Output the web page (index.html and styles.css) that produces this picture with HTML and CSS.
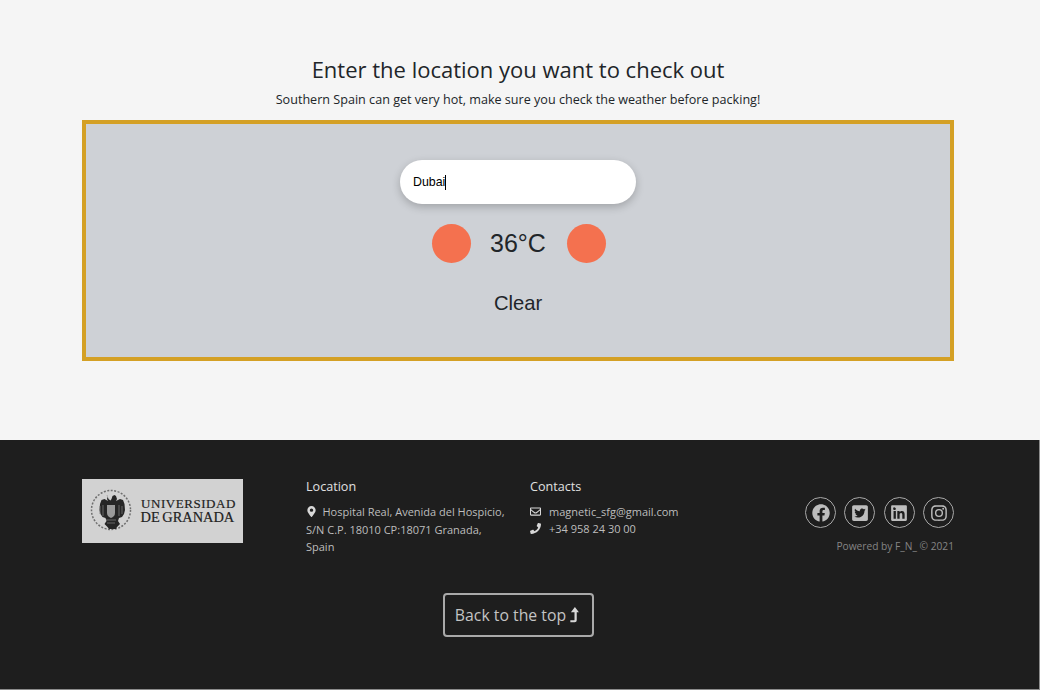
FILE: index.html
```html
<!DOCTYPE html>
<html lang="en">
<head>
<meta charset="utf-8">
<title>Weather</title>
<link rel="stylesheet" href="styles.css">
</head>
<body>
<main class="main">
  <h2 class="title">Enter the location you want to check out</h2>
  <p class="subtitle">Southern Spain can get very hot, make sure you check the weather before packing!</p>
  <section class="weather">
    <div class="search"><span class="search-text">Dubai</span><span class="caret"></span></div>
    <div class="temp-row">
      <span class="dot"></span>
      <span class="temp">36°C</span>
      <span class="dot"></span>
    </div>
    <div class="clear">Clear</div>
  </section>
</main>
<footer class="footer">
  <div class="footer-grid">
    <div class="logo-col">
      <svg class="logo" viewBox="0 0 161 64" width="161" height="64" role="img" aria-label="Universidad de Granada">
        <rect class="logo-bg" x="0" y="0" width="161" height="64"/>
        <circle class="seal-ring" cx="29" cy="31" r="19.500"/>
        <path class="crest" d="M24 16l1.500 1 1 3 2 1.500 1-1.500 1-3 2-1 1.500 1 1 3-1 2 4-2 3 1 1.500 4 .5 6-1 4-2 3-3 1-1 3 2 3-3 3-1 2h-7l-1.500-2-3-3 2-3-1-3-3-1-2-3-1-4 .5-6 1.500-4 3-1 3.500 2-1-2 1-3z"/>
        <path class="crest-lines" d="M18 27v8M21 26v11M37 26v11M40 27v8M24 41h10M25 44h8"/>
        <path class="crest-light" d="M25 26h8v8c0 3-2 4-4 5-2-1-4-2-4-5z"/>
        <text class="logo-text" x="59" y="29">UNIVERSIDAD</text>
        <text class="logo-text logo-text-big" x="58.500" y="43">DE GRANADA</text>
      </svg>
    </div>
    <div class="col">
      <h4 class="col-title">Location</h4>
      <p class="col-text">
        <svg class="ico ico-pin" viewBox="0 0 384 512"><path d="M172 502C27 291 0 269 0 192 0 86 86 0 192 0s192 86 192 192c0 77-27 99-172 310a24 24 0 0 1-40 0zm20-230a80 80 0 1 0 0-160 80 80 0 0 0 0 160z"/></svg>Hospital Real, Avenida del Hospicio, S/N C.P. 18010 CP:18071 Granada, Spain
      </p>
    </div>
    <div class="col">
      <h4 class="col-title">Contacts</h4>
      <p class="contact">
        <svg class="ico" viewBox="0 0 512 512"><path d="M464 64H48C21 64 0 85 0 112v288c0 27 21 48 48 48h416c27 0 48-21 48-48V112c0-27-21-48-48-48zm0 48v41c-22 18-58 47-134 107-17 13-50 45-74 45s-57-32-74-45C106 200 70 171 48 153v-41h416zM48 400V215c23 18 55 44 105 83 22 17 60 55 103 55s80-37 103-55c50-39 82-65 105-83v185H48z"/></svg>magnetic_sfg@gmail.com
      </p>
      <p class="contact">
        <svg class="ico" viewBox="0 0 512 512"><path d="M493 24L389 0c-11-3-23 3-27 14l-48 112c-4 10-1 21 7 28l61 50c-36 76-98 139-175 175l-50-61c-7-8-18-11-28-7L17 359c-11 5-17 16-14 28l24 104c3 11 12 19 24 19 256 0 461-208 461-461 0-12-8-22-19-25z"/></svg>+34 958 24 30 00
      </p>
    </div>
    <div class="social-col">
      <div class="socials">
        <span class="social"><svg viewBox="0 0 512 512"><path d="M504 256C504 119 393 8 256 8S8 119 8 256c0 124 91 227 209 245V328h-63v-72h63v-55c0-62 37-96 94-96 27 0 55 5 55 5v61h-31c-31 0-40 19-40 39v46h69l-11 72h-58v173c118-18 209-121 209-245z"/></svg></span>
        <span class="social"><svg viewBox="0 0 448 512"><path d="M400 32H48C21 32 0 53 0 80v352c0 27 21 48 48 48h352c27 0 48-21 48-48V80c0-27-21-48-48-48zm-49 159v9c0 87-66 187-187 187-37 0-72-11-101-30l16 1c31 0 59-11 81-28-29-1-53-19-61-45 10 1 19 1 29-1-30-6-53-33-53-65v-1c9 5 19 8 30 8a66 66 0 0 1-20-88c32 40 81 66 135 69-9-44 24-80 64-80 19 0 36 8 48 21 15-3 29-8 42-16-5 15-15 28-29 36 13-1 25-5 38-10-9 13-20 25-32 33z"/></svg></span>
        <span class="social"><svg viewBox="0 0 448 512"><path d="M416 32H31C14 32 0 46 0 64v384c0 18 14 32 31 32h385c17 0 32-14 32-32V64c0-18-15-32-32-32zM135 416H69V202h66v214zm-33-243a39 39 0 1 1 0-77 39 39 0 0 1 0 77zm282 243h-66V312c0-25-1-57-35-57-35 0-41 27-41 55v106h-66V202h64v29h1c9-17 30-35 63-35 67 0 80 45 80 102v118z"/></svg></span>
        <span class="social"><svg viewBox="0 0 448 512"><path d="M224 141a115 115 0 1 0 0 230 115 115 0 0 0 0-230zm0 190a75 75 0 1 1 0-150 75 75 0 0 1 0 150zm146-194a27 27 0 1 1-54 0 27 27 0 0 1 54 0zm76 27c-2-36-10-68-36-94s-58-34-94-36c-37-2-148-2-185 0-36 2-68 10-94 36S3 128 1 164c-2 37-2 148 0 185 2 36 10 68 36 94s58 34 94 36c37 2 148 2 185 0 36-2 68-10 94-36s34-58 36-94c2-37 2-148 0-185zm-48 225c-8 20-23 35-43 43-30 12-100 9-131 9s-102 3-131-9c-20-8-35-23-43-43-12-30-9-100-9-131s-3-102 9-131c8-20 23-35 43-43 30-12 100-9 131-9s102-3 131 9c20 8 35 23 43 43 12 30 9 100 9 131s3 102-9 131z"/></svg></span>
      </div>
      <p class="powered">Powered by F_N_ © 2021</p>
    </div>
  </div>
  <div class="back-wrap">
    <div class="back">Back to the top<svg class="back-ico" viewBox="0 0 12 20"><path d="M6.500 0L11.500 6.500H8.800V16.500a2.500 2.500 0 0 1-2.500 2.500H0.800V16.500H5.300c.4 0 .7-.3.7-.7V6.500H1.500z"/></svg></div>
  </div>
</footer>
</body>
</html>
```

FILE: styles.css
```css
* { box-sizing: border-box; }
html, body { margin: 0; padding: 0; }
body {
  width: 1040px;
  height: 690px;
  overflow: hidden;
  background: #f5f5f5;
  font-family: "Open Sans", sans-serif;
  color: #212529;
}
.main {
  height: 440px;
  padding: 53px 86px 0 82px;
  text-align: center;
}
.title {
  margin: 0;
  font-size: 22px;
  line-height: 32px;
  font-weight: 400;
}
.subtitle {
  margin: 5px 0 0;
  font-size: 12.6px;
  line-height: 20px;
}
.weather {
  margin-top: 10px;
  height: 241px;
  border: 4px solid #d4a025;
  background: #ced1d6;
  display: flex;
  flex-direction: column;
  align-items: center;
  padding-top: 36px;
  font-family: "Liberation Sans", sans-serif;
}
.search {
  width: 236px;
  height: 44px;
  border-radius: 22px;
  background: #fff;
  box-shadow: 0 3px 8px rgba(0, 0, 0, 0.22);
  display: flex;
  align-items: center;
  padding-left: 13px;
  font-size: 12.4px;
  color: #000;
}
.caret {
  width: 1px;
  height: 15px;
  margin-left: -0.5px;
  background: #000;
}
.temp-row {
  margin-top: 20px;
  margin-left: 2px;
  display: flex;
  align-items: center;
  gap: 19px;
  height: 39px;
}
.dot {
  width: 39px;
  height: 39px;
  border-radius: 50%;
  background: #f4714f;
}
.temp {
  width: 58px;
  margin-left: -1px;
  margin-right: 1px;
  text-align: center;
  font-size: 25px;
  white-space: nowrap;
}
.clear {
  margin-top: 25px;
  font-size: 20.2px;
  line-height: 30px;
}
.footer {
  height: 250px;
  background: #1e1e1e;
  color: #bdbdbd;
  padding: 39px 85px 0 82px;
  border-right: 1px solid #8c8c8c;
  border-bottom: 1px solid #8c8c8c;
}
.footer-grid {
  display: grid;
  grid-template-columns: 224px 224px 1fr 224px;
  height: 114px;
}
.logo { display: block; }
.logo-bg { fill: #d2d2d2; }
.seal-ring { fill: none; stroke: #6e6e6e; stroke-width: 1.5; stroke-dasharray: 2 1.5; }
.crest { fill: #262626; }
.crest-lines { fill: none; stroke: #7a7a7a; stroke-width: 0.8; }
.crest-light { fill: #9a9a9a; }
.logo-text {
  font-family: "Liberation Serif", serif;
  font-size: 13px;
  fill: #222;
  stroke: #222;
  stroke-width: 0.2;
  letter-spacing: 0.55px;
}
.logo-text-big {
  font-size: 14.4px;
  letter-spacing: 0;
  word-spacing: -1px;
}
.col-title {
  margin: 0 0 8px;
  font-size: 12.6px;
  line-height: 16px;
  font-weight: 400;
  color: #e0e0e0;
}
.col-text {
  margin: 0;
  width: 205px;
  font-size: 11px;
  line-height: 17.5px;
}
.contact {
  margin: 0;
  font-size: 11px;
  line-height: 17.2px;
  display: flex;
  align-items: center;
}
.ico {
  width: 11px;
  height: 11px;
  fill: #d8d8d8;
  margin-right: 8px;
  flex: none;
}
.ico-pin {
  vertical-align: -1px;
  margin-right: 5.500px;
}
.social-col {
  text-align: right;
  padding-top: 18px;
}
.socials {
  display: flex;
  justify-content: flex-end;
  gap: 8.300px;
}
.social {
  width: 31px;
  height: 31px;
  border: 1px solid #a8a8a8;
  border-radius: 50%;
  display: flex;
  align-items: center;
  justify-content: center;
}
.social svg {
  width: 18px;
  height: 18px;
  fill: #bdbdbd;
}
.powered {
  margin: 10px 0 0;
  font-size: 10.2px;
  line-height: 16px;
  color: #858585;
}
.back-wrap {
  display: flex;
  justify-content: center;
}
.back {
  width: 151px;
  height: 44px;
  border: 2px solid #a9a9a9;
  border-radius: 4px;
  display: flex;
  align-items: center;
  justify-content: center;
  font-size: 15.8px;
  color: #c4c4c4;
  padding-right: 1px;
}
.back-ico {
  width: 11px;
  height: 16px;
  margin-left: 3px;
  fill: #d8d8d8;
}
```
